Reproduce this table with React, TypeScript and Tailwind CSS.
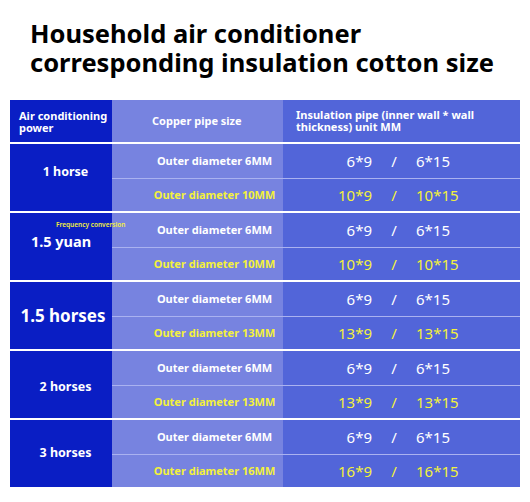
const Y = "text-[#f3f13b]";

type Sub = { pipe: string; a: string; b: string; yellow?: boolean };
type Group = { label: string; size: string; subs: Sub[]; tag?: boolean };

const groups: Group[] = [
  {
    label: "1 horse",
    size: "text-[12.5px] pl-[9px] pb-[10px]",
    subs: [
      { pipe: "Outer diameter 6MM", a: "6*9", b: "6*15" },
      { pipe: "Outer diameter 10MM", a: "10*9", b: "10*15", yellow: true },
    ],
  },
  {
    label: "1.5 yuan",
    size: "text-[14.5px] pb-[9px]",
    tag: true,
    subs: [
      { pipe: "Outer diameter 6MM", a: "6*9", b: "6*15" },
      { pipe: "Outer diameter 10MM", a: "10*9", b: "10*15", yellow: true },
    ],
  },
  {
    label: "1.5 horses",
    size: "text-[17px] pl-[4px]",
    subs: [
      { pipe: "Outer diameter 6MM", a: "6*9", b: "6*15" },
      { pipe: "Outer diameter 13MM", a: "13*9", b: "13*15", yellow: true },
    ],
  },
  {
    label: "2 horses",
    size: "text-[12.5px] pl-[9px] pt-[6px]",
    subs: [
      { pipe: "Outer diameter 6MM", a: "6*9", b: "6*15" },
      { pipe: "Outer diameter 13MM", a: "13*9", b: "13*15", yellow: true },
    ],
  },
  {
    label: "3 horses",
    size: "text-[12.5px] pl-[9px]",
    subs: [
      { pipe: "Outer diameter 6MM", a: "6*9", b: "6*15" },
      { pipe: "Outer diameter 16MM", a: "16*9", b: "16*15", yellow: true },
    ],
  },
];

function Row({ sub, first }: { sub: Sub; first: boolean }) {
  const color = sub.yellow ? Y : "text-white";
  return (
    <div className={`grid h-full grid-cols-[171px_237px] ${first ? "" : "border-t border-[#aab2f0]"}`}>
      <div className={`flex items-center justify-center bg-[#7783e0] pl-[34px] text-[11px] font-bold ${color}`}>
        {sub.pipe}
      </div>
      <div className={`grid grid-cols-[89px_44px_1fr] items-center bg-[#5265d9] text-[15px] ${color}`}>
        <span className="text-right">{sub.a}</span>
        <span className="text-center">/</span>
        <span>{sub.b}</span>
      </div>
    </div>
  );
}

export default function App() {
  return (
    <div className="h-[502px] w-[530px] overflow-hidden bg-white font-['Noto_Sans',sans-serif]">
      <h1 className="pl-[30px] pt-[19px] text-[25.5px] font-bold leading-[29px] text-black">
        Household air conditioner
        <br />
        corresponding insulation cotton size
      </h1>

      <div className="ml-[10px] mt-[23px] flex w-[510px] flex-col gap-[2px]">
        <div className="grid h-[42px] grid-cols-[102px_171px_237px] text-[11px] font-bold leading-[12.5px] text-white">
          <div className="flex items-center bg-[#0a1ec4] pl-[9px] pt-[2px]">
            Air conditioning
            <br />
            power
          </div>
          <div className="flex items-center bg-[#7783e0] pl-[40px]">Copper pipe size</div>
          <div className="flex items-center bg-[#5265d9] pl-[13px]">
            Insulation pipe (inner wall * wall
            <br />
            thickness) unit MM
          </div>
        </div>

        {groups.map((g) => (
          <div key={g.label} className="relative grid h-[67px] grid-cols-[102px_408px]">
            <div className={`flex items-center justify-center bg-[#0a1ec4] font-bold text-white ${g.size}`}>
              {g.label}
            </div>
            <div className="grid grid-rows-2">
              {g.subs.map((s, i) => (
                <Row key={s.pipe + i} sub={s} first={i === 0} />
              ))}
            </div>
            {g.tag && (
              <span className={`absolute left-[46px] top-[9px] text-[6.5px] font-semibold leading-none ${Y}`}>
                Frequency conversion
              </span>
            )}
          </div>
        ))}
      </div>
    </div>
  );
}
